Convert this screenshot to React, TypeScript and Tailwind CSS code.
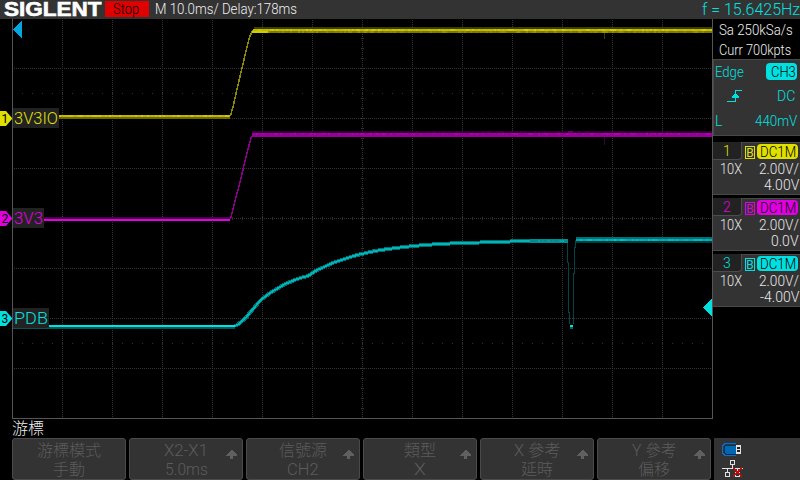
import React, { useLayoutEffect, useRef, useState } from "react";

/** Text squeezed or stretched horizontally to an exact width. */
function Fit({ w, className = "", children }: { w: number; className?: string; children: React.ReactNode }) {
  const ref = useRef<HTMLSpanElement>(null);
  const [k, setK] = useState(1);
  useLayoutEffect(() => {
    if (ref.current) setK(w / ref.current.offsetWidth);
  }, [w]);
  return (
    <span className="block shrink-0" style={{ width: w }}>
      <span
        ref={ref}
        className={`inline-block origin-left whitespace-nowrap align-top ${className}`}
        style={{ transform: `scaleX(${k})` }}
      >
        {children}
      </span>
    </span>
  );
}

const V_LINES = Array.from({ length: 13 }, (_, i) => 62 + i * 50);
const H_LINES = Array.from({ length: 7 }, (_, i) => 68 + i * 50);
const X_TICKS = Array.from({ length: 69 }, (_, i) => 22 + i * 10);
const Y_TICKS = Array.from({ length: 39 }, (_, i) => 28 + i * 10);
const noise = (i: number) => Math.abs(Math.sin(i * 12.9898) * 43758.5453) % 1;

const CURVE =
  "235,326 238,324.5 241,322 246,317.5 250,312.5 254,308 258,303 262,299 266,296 270,293 275,290 280,287 285,284 290,282 296,279.5 302,277.5 308,276 311,274 314,272 317,270 322,268 328,265 334,262.5 340,260.5 346,258.5 352,256.5 358,254.8 364,253.5 370,252 378,250.5 386,249.3 396,248 408,246.6 424,245 440,244 460,243 480,242.5 510,241.5 530,241 568,241";

function Grain({ x1, x2, y, h, color, seed }: { x1: number; x2: number; y: number; h: number; color: string; seed: number }) {
  const cells = [];
  for (let x = x1; x < x2; x += 2) {
    const n = noise(x + seed);
    if (n > 0.45) cells.push(<rect key={x} x={x} y={y} width={2} height={h} fill={color} opacity={(n - 0.4) * 1.1} />);
  }
  return <g>{cells}</g>;
}

function Tag({ y, n, color, text, w, boxW }: { y: number; n: string; color: string; text: string; w: number; boxW: number }) {
  return (
    <g>
      <path d={`M0 ${y - 7}H6L12 ${y}V${y + 1}L6 ${y + 8}H0Z`} fill={color} />
      <text x={1.5} y={y + 5} fontSize={12} fill="#000" className="font-normal">{n}</text>
      <rect x={13} y={y - 10} width={boxW} height={20} fill="#222" />
      <text x={14} y={y + 6} fontSize={17} fill={color} textLength={w} lengthAdjust="spacingAndGlyphs">{text}</text>
    </g>
  );
}

function Plot() {
  return (
    <svg width={712} height={400} viewBox="0 19 712 400" shapeRendering="crispEdges" className="block shrink-0 bg-black">
      <g stroke="#343434" strokeWidth={1}>
        {V_LINES.map((x) => <line key={x} x1={x + 0.5} x2={x + 0.5} y1={20} y2={418} strokeDasharray="1 1" />)}
        {H_LINES.map((y) => <line key={y} x1={14} x2={712} y1={y + 0.5} y2={y + 0.5} strokeDasharray="1 1" />)}
      </g>
      <g fill="#303030">
        {X_TICKS.map((x) => (
          <g key={x}>
            <rect x={x} y={217} width={1} height={3} />
            <rect x={x} y={93} width={1} height={1} />
            <rect x={x} y={343} width={1} height={1} />
          </g>
        ))}
        {Y_TICKS.map((y) => <rect key={y} x={361} y={y} width={3} height={1} />)}
      </g>
      <rect x={12} y={19} width={1} height={400} fill="#555" />
      <rect x={12} y={418} width={700} height={1} fill="#555" />

      {/* channel 1 */}
      <rect x={13} y={115} width={217} height={2} fill="#b8b400" />
      <rect x={13} y={117} width={217} height={2} fill="#6b6800" />
      <Grain x1={59} x2={230} y={115} h={2} color="#e0dc00" seed={3} />
      <path d="M230.5 116L233.5 105L237.5 87L242 68L246 51L249.5 37L253 30" fill="none" stroke="#8c8800" strokeWidth={1.5} />
      <rect x={254} y={27} width={458} height={2} fill="#3e3c00" />
      <rect x={253} y={29} width={459} height={2} fill="#bdb800" />
      <rect x={252} y={31} width={460} height={2} fill="#7c7800" />
      <Grain x1={254} x2={712} y={29} h={2} color="#e0dc00" seed={9} />
      <Grain x1={254} x2={712} y={31} h={2} color="#aaa600" seed={17} />
      <rect x={252} y={31} width={16} height={2} fill="#d0cc00" />
      <rect x={604} y={33} width={1} height={6} fill="#3e3c00" />

      {/* channel 2 */}
      <rect x={13} y={217} width={217} height={2} fill="#4c004c" />
      <rect x={13} y={219} width={217} height={2} fill="#e000e0" />
      <path d="M230.5 219L234 205L240 182L246 157L251.5 136" fill="none" stroke="#8a008a" strokeWidth={1.5} />
      <rect x={252} y={131} width={460} height={2} fill="#2c002c" />
      <rect x={252} y={133} width={460} height={4} fill="#970097" />
      <Grain x1={252} x2={712} y={133} h={2} color="#c000c0" seed={5} />
      <Grain x1={252} x2={712} y={131} h={2} color="#4a004a" seed={8} />
      <rect x={568} y={131} width={5} height={2} fill="#650065" />
      <rect x={604} y={137} width={1} height={8} fill="#3c003c" />

      {/* channel 3 */}
      <rect x={13} y={327} width={222} height={2} fill="#005555" />
      <rect x={13} y={325} width={222} height={2} fill="#00e0e0" />
      <polyline points={CURVE} fill="none" stroke="#006e70" strokeWidth={4} />
      <polyline points={CURVE} fill="none" stroke="#00b4b8" strokeWidth={2} />
      <rect x={530} y={239} width={38} height={4} fill="#008c90" />
      <Grain x1={530} x2={568} y={240} h={2} color="#00b4b8" seed={4} />
      <path d="M567.5 243V262H568.5V312H569.5V324" fill="none" stroke="#004648" />
      <path d="M573.5 324V273H574.5V247H575.5V240" fill="none" stroke="#004648" />
      <rect x={570} y={325} width={3} height={2} fill="#00e0e0" />
      <rect x={570} y={327} width={3} height={2} fill="#006466" />
      <rect x={576} y={237} width={136} height={2} fill="#007074" />
      <rect x={576} y={239} width={136} height={2} fill="#00a8ac" />
      <rect x={576} y={241} width={136} height={2} fill="#003e40" />
      <Grain x1={576} x2={712} y={239} h={2} color="#00d4d8" seed={6} />

      <g shapeRendering="auto">
        <Tag y={118} n="1" color="#e0e000" text="3V3IO" w={44} boxW={46} />
        <Tag y={218} n="2" color="#e000e0" text="3V3" w={29} boxW={31} />
        <Tag y={318} n="3" color="#00e0e0" text="PDB" w={34} boxW={36} />
      </g>
      <path d="M13 29.5L22 21V38Z" fill="#00a6e0" />
      <path d="M703 307.5L712 299V316Z" fill="#00e0e0" />
    </svg>
  );
}

type Channel = { n: string; offset: string; text: string; bg: string; border: string };
const CHANNELS: Channel[] = [
  { n: "1", offset: "4.00V", text: "text-[#e0e000]", bg: "bg-[#e0e000]", border: "border-[#e0e000]" },
  { n: "2", offset: "0.0V", text: "text-[#e000e0]", bg: "bg-[#e000e0]", border: "border-[#e000e0]" },
  { n: "3", offset: "-4.00V", text: "text-[#00e0e0]", bg: "bg-[#00e0e0]", border: "border-[#00e0e0]" },
];
const OFFSET_W: Record<string, number> = { "4.00V": 35, "0.0V": 28, "-4.00V": 39 };

function ChannelPanel({ c }: { c: Channel }) {
  return (
    <div className="h-[53px] bg-[#333] border-b border-[#484848] text-[14px] leading-4 text-[#e8e8e8]">
      <div className="flex h-[18px]">
        <div className={`flex w-[29px] justify-center border-r border-b border-[#4c4c4c] bg-[#222] pt-px rounded-br ${c.text}`}>{c.n}</div>
        <div className="flex flex-1 items-start gap-[2px] border-t border-[#484848] pl-[3px] pt-px">
          <div className={`mt-[2px] flex h-[13px] w-[10px] justify-center border text-[12px] leading-[12px] font-normal ${c.border} ${c.text}`}>B</div>
          <div className={`flex h-[15px] w-[41px] justify-center rounded-[4px] leading-[16px] text-black ${c.bg}`}>
            <Fit w={36}>DC1M</Fit>
          </div>
        </div>
      </div>
      <div className="flex justify-between pl-[7px] pr-px pt-px">
        <Fit w={22}>10X</Fit>
        <Fit w={40}>2.00V/</Fit>
      </div>
      <div className="flex justify-end pr-px">
        <Fit w={OFFSET_W[c.offset]}>{c.offset}</Fit>
      </div>
    </div>
  );
}

function Sidebar() {
  return (
    <div className="flex h-[400px] w-[88px] flex-col border-l border-[#555] bg-black text-[14px] text-[#f0f0f0]">
      <div className="flex h-10 flex-col gap-1 pl-[6px] pt-[3px] leading-4">
        <Fit w={74}>Sa 250kSa/s</Fit>
        <Fit w={72}>Curr 700kpts</Fit>
      </div>
      <div className="flex h-[77px] flex-col border-y border-l border-[#484848] bg-[#333] pl-px leading-4 text-[#00e0e0]">
        <div className="flex items-center justify-between pr-[3px] pt-[3px]">
          <Fit w={29}>Edge</Fit>
          <div className="flex h-[17px] w-[31px] items-center justify-end rounded-[4px] bg-[#00e0e0] pr-px text-black">
            <Fit w={25}>CH3</Fit>
          </div>
        </div>
        <div className="flex items-center justify-between pl-[12px] pr-[5px] pt-[8px]">
          <svg width="15" height="13" viewBox="0 0 15 13" shapeRendering="crispEdges">
            <path d="M0 11.5H8.5V.5H15" fill="none" stroke="#00e0e0" />
            <path d="M8 3h1v1h1v1h1v1h1v2H5V6h1V5h1V4h1z" fill="#00e0e0" />
          </svg>
          <Fit w={18}>DC</Fit>
        </div>
        <div className="flex justify-between pr-[3px] pt-[9px]">
          <Fit w={7}>L</Fit>
          <Fit w={42}>440mV</Fit>
        </div>
      </div>
      <div className="mt-[6px] flex flex-col gap-[3px]">
        {CHANNELS.map((c) => <ChannelPanel key={c.n} c={c} />)}
      </div>
    </div>
  );
}

const MENU = [
  { a: "游標模式", b: "手動", aw: 64, bw: 32, arrow: false },
  { a: "X2-X1", b: "5.0ms", aw: 44, bw: 43, arrow: true },
  { a: "信號源", b: "CH2", aw: 48, bw: 32, arrow: true },
  { a: "類型", b: "X", aw: 32, bw: 12, arrow: true },
  { a: "X 參考", b: "延時", aw: 47, bw: 32, arrow: true },
  { a: "Y 參考", b: "偏移", aw: 45, bw: 32, arrow: true },
];

export default function App() {
  return (
    <div className="flex h-[480px] w-[800px] flex-col overflow-hidden bg-black font-light font-['Roboto','Noto_Sans_CJK_TC',sans-serif]">
      <header className="flex h-[19px] shrink-0 items-center bg-[#333] text-[#f0f0f0]">
        <div className="ml-[4px] font-['Liberation_Sans',sans-serif] text-[20px] font-bold leading-[19px] text-white">
          <Fit w={98} className="[-webkit-text-stroke:0.6px_#fff]">SIGLENT</Fit>
        </div>
        <div className="ml-[3px] flex h-4 w-11 items-center bg-[#e00000] pl-[8px] mb-px text-[14px] leading-4 text-black">
          <Fit w={26}>Stop</Fit>
        </div>
        <div className="ml-[6px] text-[14px] leading-[19px]">
          <Fit w={142}>M 10.0ms/ Delay:178ms</Fit>
        </div>
        <div className="ml-auto text-[16px] leading-[19px] text-[#00e0e0]">
          <Fit w={98}>f = 15.6425Hz</Fit>
        </div>
      </header>
      <main className="flex h-[400px] shrink-0">
        <Plot />
        <Sidebar />
      </main>
      <div className="h-[19px] shrink-0 pl-[12px] text-[16px] leading-[19px] text-[#f0f0f0]">游標</div>
      <footer className="flex h-[42px] shrink-0 gap-[3px] pl-[12px]">
        {MENU.map((m) => (
          <div key={m.a} className="relative flex w-[114px] flex-col items-center rounded-[3px] border border-[#4a4a4a] bg-[#333] pt-[2px] text-[16px] leading-[19px] text-[#5c5c5c]">
            <Fit w={m.aw}>{m.a}</Fit>
            <Fit w={m.bw}>{m.b}</Fit>
            {m.arrow && (
              <svg className="absolute right-[5px] top-[11px]" width="11" height="9" viewBox="0 0 11 9" shapeRendering="crispEdges">
                <path d="M5 0h1l5 5v1H7v3H4V6H0V5z" fill="#606060" />
              </svg>
            )}
          </div>
        ))}
        <div className="flex flex-1 flex-col gap-[4px] bg-[#333] pl-[8px] pt-[5px]">
          <svg width="20" height="13" viewBox="0 0 20 13" shapeRendering="crispEdges">
            <path d="M14 .5H3L.5 3V10L3 12.5H14" fill="none" stroke="#0070e0" />
            <path d="M14 2H4L2 4V9L4 11H14Z" fill="#0068b0" stroke="#001830" strokeWidth=".6" />
            <path d="M14 2h5v9h-5z" fill="#e0e0e0" />
            <path d="M15 4h3v2h-3zM15 7h3v2h-3z" fill="#222" />
          </svg>
          <svg width="21" height="17" viewBox="0 0 21 17" shapeRendering="crispEdges">
            <path d="M8.5 .5h4v4h-4zM10.5 4.5v4M0 8.5h21M5.5 8.5v4M15.5 8.5v4M3.5 12.5h4v4h-4zM13.5 12.5h4v4h-4z" fill="none" stroke="#e0e0e0" />
            <path d="M11 7.5L20 16.5M20 7.5L11 16.5" stroke="#e00000" />
          </svg>
        </div>
      </footer>
    </div>
  );
}
